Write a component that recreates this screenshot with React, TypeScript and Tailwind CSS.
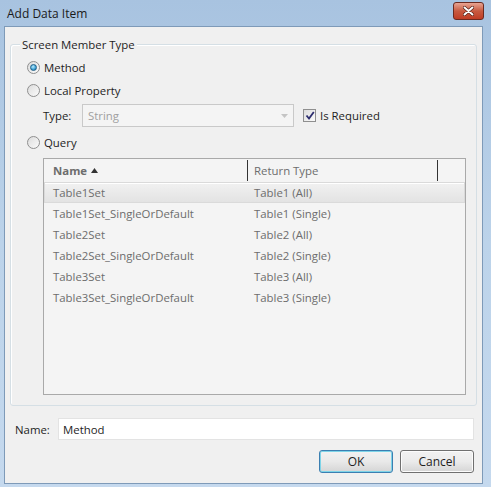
import React from 'react';

const rows: [string, string][] = [
  ['Table1Set', 'Table1 (All)'],
  ['Table1Set_SingleOrDefault', 'Table1 (Single)'],
  ['Table2Set', 'Table2 (All)'],
  ['Table2Set_SingleOrDefault', 'Table2 (Single)'],
  ['Table3Set', 'Table3 (All)'],
  ['Table3Set_SingleOrDefault', 'Table3 (Single)'],
];

function Radio({ checked }: { checked?: boolean }) {
  return (
    <span className="flex h-[13px] w-[13px] items-center justify-center rounded-full border border-[#8f8f8f] bg-gradient-to-br from-[#dcdcdc] to-[#fbfbfb]">
      {checked && (
        <span className="h-[7px] w-[7px] rounded-full border border-[#1d5f88] bg-[radial-gradient(circle_at_40%_35%,#b9ecff,#3b9fd3_60%,#1c6a9c)]" />
      )}
    </span>
  );
}

export default function App() {
  return (
    <div
      className="relative h-[487px] w-[491px] overflow-hidden bg-gradient-to-b from-[#a8c3e0] via-[#bcd3ea] to-[#c5d9ee] text-[11.4px] leading-[17px] text-[#1e1e1e]"
      style={{ fontFamily: '"Open Sans", "Noto Sans", sans-serif' }}
    >
      {/* title bar */}
      <div className="flex h-[26px] items-center justify-between pl-[7px] pr-[7px]">
        <span className="text-[12px] text-[#1a1a1a]">Add Data Item</span>
        <div className="mt-[-4px] flex h-[18px] w-[31px] items-center justify-center rounded-[3px] border border-[#6b2a20] bg-gradient-to-b from-[#e8a493] via-[#c75a40] to-[#c03c24]">
          <svg width="11" height="10" viewBox="0 0 11 10">
            <path d="M1.5 1.5 L9.5 8.5 M9.5 1.5 L1.5 8.5" stroke="#4a1a12" strokeWidth="3.2" strokeLinecap="round" />
            <path d="M1.5 1.5 L9.5 8.5 M9.5 1.5 L1.5 8.5" stroke="#ffffff" strokeWidth="2" strokeLinecap="round" />
          </svg>
        </div>
      </div>

      {/* client area */}
      <div className="ml-[4px] mr-[8px] flex h-[458px] flex-col border border-[#7e9ab8] bg-[#f0f0f0] px-[5px]">
        {/* group box */}
        <div className="relative mt-[17px] h-[362px] rounded-[3px] border border-[#d5dfe5] pb-[9px] pl-[16px] pr-[10px] pt-[14px] shadow-[inset_1px_1px_0_#fff]">
          <span className="absolute left-[9px] top-[-9px] bg-[#f0f0f0] px-[2px] text-[#1e1e1e]">Screen Member Type</span>

          <div className="flex items-center gap-[4px]">
            <Radio checked />
            <span>Method</span>
          </div>
          <div className="mt-[6px] flex items-center gap-[4px]">
            <Radio />
            <span>Local Property</span>
          </div>
          <div className="mt-[5px] flex items-center pl-[16px]">
            <span className="w-[39px]">Type:</span>
            <div className="flex h-[23px] w-[212px] items-center justify-between border border-[#c9c9c9] bg-[#f4f4f4] pl-[5px] pr-[5px] text-[#a0a0a0]">
              <span>String</span>
              <svg width="7" height="4" viewBox="0 0 7 4"><path d="M0 0 H7 L3.5 4 Z" fill="#c4c4c4" /></svg>
            </div>
            <span className="ml-[9px] flex h-[13px] w-[13px] items-center justify-center border border-[#8f8f8f] bg-gradient-to-br from-[#dcdcdc] to-[#fbfbfb]">
              <svg width="10" height="9" viewBox="0 0 10 9"><path d="M1.5 4.5 L4 7.5 L8.8 1" fill="none" stroke="#2c2d6e" strokeWidth="1.8" /></svg>
            </span>
            <span className="ml-[4px]">Is Required</span>
          </div>
          <div className="mt-[7px] flex items-center gap-[4px]">
            <Radio />
            <span>Query</span>
          </div>

          {/* list */}
          <div className="ml-[16px] mt-[7px] h-[237px] border border-[#a9a9a9] bg-[#f4f4f4] text-[#6d6d6d]">
            <div className="flex h-[23px] items-center bg-[#f4f4f4]">
              <div className="flex h-full w-[203px] items-center gap-[4px] pl-[9px] font-bold text-[#6d6d6d]">
                <span>Name</span>
                <svg width="7" height="5" viewBox="0 0 7 5"><path d="M0 5 L3.5 0 L7 5 Z" fill="#333" /></svg>
              </div>
              <div className="h-[21px] w-px bg-[#333]" />
              <div className="flex h-full w-[189px] items-center pl-[6px]">Return Type</div>
              <div className="h-[21px] w-px bg-[#333]" />
            </div>
            {rows.map(([n, t], i) => (
              <div
                key={n}
                className={`flex h-[21px] items-center ${
                  i === 0 ? 'border border-[#dadada] bg-gradient-to-b from-[#f1f1f1] to-[#e3e3e3] shadow-[inset_0_1px_0_#fff]' : 'border border-transparent'
                }`}
              >
                <span className="w-[203px] pl-[8px]">{n}</span>
                <span className="pl-[6px]">{t}</span>
              </div>
            ))}
          </div>
        </div>

        {/* name */}
        <div className="mr-[3px] mt-[12px] flex items-center">
          <span className="w-[48px] pl-[5px] text-[#1e1e1e]">Name:</span>
          <div className="flex h-[22px] flex-1 items-center border border-[#e3e3e3] bg-white pl-[4px] text-[#1e1e1e]">Method</div>
        </div>

        {/* buttons */}
        <div className="mr-[3px] mt-[10px] flex justify-end gap-[7px]">
          <button className="h-[23px] w-[74px] rounded-[3px] border border-[#3c7fb1] bg-gradient-to-b from-[#f2f2f2] via-[#e9e9e9] to-[#d5d5d5] text-[12px] text-[#1e1e1e] shadow-[inset_0_0_0_1px_#7ed4e8]">
            OK
          </button>
          <button className="h-[23px] w-[74px] rounded-[3px] border border-[#707070] bg-gradient-to-b from-[#f2f2f2] via-[#ebebeb] to-[#d5d5d5] text-[12px] text-[#1e1e1e] shadow-[inset_0_0_0_1px_#fcfcfc]">
            Cancel
          </button>
        </div>
      </div>
    </div>
  );
}
